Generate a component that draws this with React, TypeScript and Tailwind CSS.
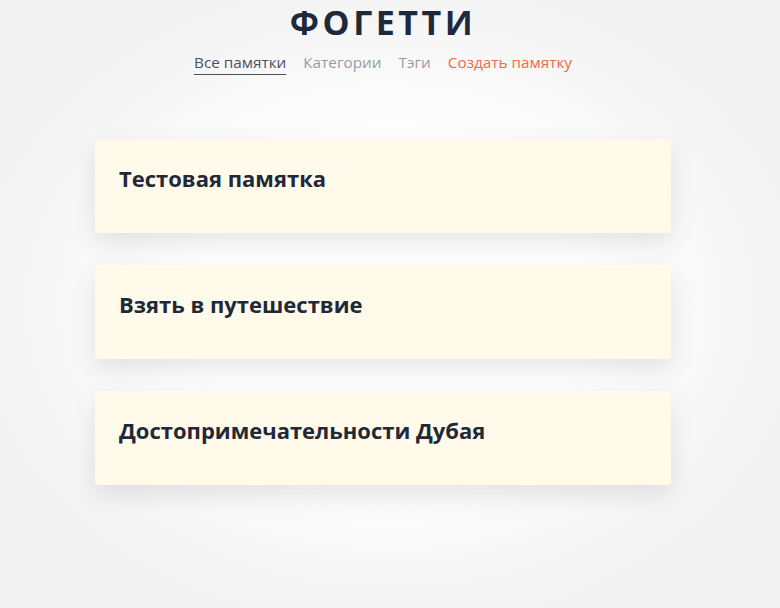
const notes = [
  { id: 1, title: "Тестовая памятка" },
  { id: 2, title: "Взять в путешествие" },
  { id: 3, title: "Достопримечательности Дубая" },
];

const links = [
  { label: "Все памятки", active: true },
  { label: "Категории" },
  { label: "Тэги" },
  { label: "Создать памятку", accent: true },
];

const App = () => {
  return (
    <div className="min-h-[608px] bg-[radial-gradient(ellipse_at_center,#ffffff_0%,#ffffff_35%,#f3f3f3_75%)] font-['Open_Sans','Lato',sans-serif]">
      <div className="w-[766px]">
        <header className="flex flex-col items-center pt-[2px]">
          <h1 className="text-[34px] font-bold leading-[40px] tracking-[3.5px] text-[#1e2a3b]">
            ФОГЕТТИ
          </h1>
          <nav className="mt-[10px] flex gap-[17px] text-[15.3px] leading-[20px]">
            {links.map((link) => (
              <a
                key={link.label}
                href="#"
                className={
                  link.active
                    ? "border-b border-[#4b4f63] pb-[2px] text-[#4b4f63]"
                    : link.accent
                      ? "text-[#ef6a45]"
                      : "text-[#9a9aa6]"
                }
              >
                {link.label}
              </a>
            ))}
          </nav>
        </header>

        <main className="mx-auto mt-[64px] flex w-[576px] flex-col gap-8 pb-[120px]">
          {notes.map((note) => (
            <div
              key={note.id}
              className="h-[94px] rounded-[3px] bg-[#fffae9] px-6 pt-[25px] shadow-[0_10px_26px_rgba(0,0,0,0.1)]"
            >
              <p className="text-[22px] font-bold leading-[28px] text-[#1f2937]">
                {note.title}
              </p>
            </div>
          ))}
        </main>
      </div>
    </div>
  );
};

export default App;
